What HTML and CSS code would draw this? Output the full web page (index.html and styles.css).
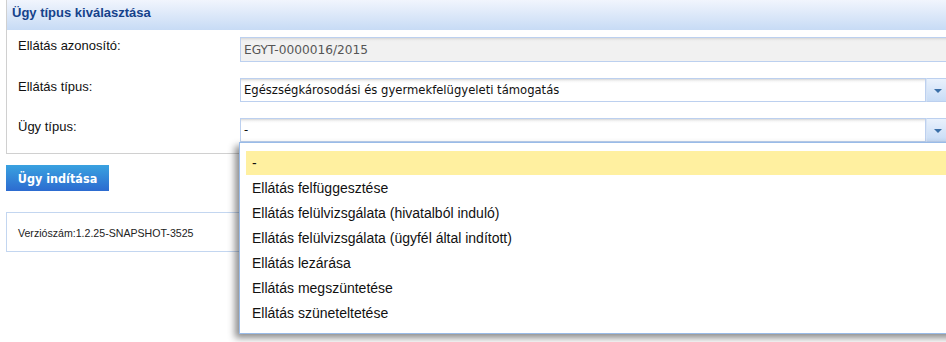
FILE: index.html
```html
<!DOCTYPE html>
<html lang="hu">
<head>
    <meta charset="UTF-8">
    <title>Ügy típus kiválasztása</title>
    <link rel="stylesheet" href="styles.css">
</head>
<body>
    <div class="panel">
        <div class="panel-header">Ügy típus kiválasztása</div>
        <div class="panel-body">
            <div class="form-row">
                <label>Ellátás azonosító:</label>
                <div class="field disabled">EGYT-0000016/2015</div>
            </div>
            <div class="form-row">
                <label>Ellátás típus:</label>
                <div class="combo">
                    <div class="field">Egészségkárosodási és gyermekfelügyeleti támogatás</div>
                    <div class="trigger"></div>
                </div>
            </div>
            <div class="form-row">
                <label>Ügy típus:</label>
                <div class="combo">
                    <div class="field">-</div>
                    <div class="trigger"></div>
                </div>
            </div>
        </div>
    </div>

    <button class="btn" type="button">Ügy indítása</button>

    <div class="version">Verziószám:1.2.25-SNAPSHOT-3525</div>

    <ul class="combo-list">
        <li class="selected">-</li>
        <li>Ellátás felfüggesztése</li>
        <li>Ellátás felülvizsgálata (hivatalból induló)</li>
        <li>Ellátás felülvizsgálata (ügyfél által indított)</li>
        <li>Ellátás lezárása</li>
        <li>Ellátás megszüntetése</li>
        <li>Ellátás szüneteltetése</li>
    </ul>
</body>
</html>
```

FILE: styles.css
```css
body{
    margin: 0;
    padding-left: 6px;
    font-family: "Liberation Sans", Arial, sans-serif;
    font-size: 13px;
    color: #111;
    background: #fff;
    overflow: hidden;
    position: relative;
    height: 342px;
}
.panel{
    width: 954px;
    border-left: 1px solid #d0d0d0;
    border-bottom: 1px solid #d0d0d0;
}
.panel-header{
    height: 30px;
    line-height: 26px;
    padding-left: 5px;
    font-weight: bold;
    font-size: 13px;
    color: #15428b;
    background: linear-gradient(#f1f5fd, #c7dbf5);
    box-sizing: border-box;
}
.panel-body{
    padding: 7px 13px 11px 11px;
    display: flex;
    flex-direction: column;
    gap: 16px;
}
.form-row{
    display: grid;
    grid-template-columns: 222px 1fr;
    align-items: start;
}
.form-row label{
    padding-top: 1px;
}
.field{
    height: 24px;
    line-height: 22px;
    box-sizing: border-box;
    border: 1px solid #bcd0ef;
    padding-left: 3px;
    font-family: "DejaVu Sans", Verdana, sans-serif;
    font-size: 11.6px;
    color: #111;
    background: linear-gradient(#d8d8d8 0, #f6f6f6 2px, #fff 4px);
}
.field.disabled{
    height: 25px;
    line-height: 24px;
    font-size: 12.2px;
    color: #555;
    background: linear-gradient(#d8d8d8 0, #ececec 2px, #f1f1f1 4px);
}
.combo{
    display: flex;
}
.combo .field{
    flex: 1;
}
.trigger{
    width: 22px;
    height: 24px;
    box-sizing: border-box;
    border: 1px solid #bcd0ef;
    border-left: 1px solid #d6e3f5;
    background: linear-gradient(#e9f1fc, #c8dcf6);
    position: relative;
}
.trigger:after{
    content: "";
    position: absolute;
    left: 7px;
    top: 10px;
    border-left: 4px solid transparent;
    border-right: 4px solid transparent;
    border-top: 4px solid #3a6fa8;
}
.btn{
    display: block;
    margin-top: 11px;
    width: 103px;
    height: 26px;
    border: 0;
    padding: 0;
    font-family: "DejaVu Sans Condensed", "DejaVu Sans", sans-serif;
    font-weight: bold;
    font-size: 12.5px;
    color: #fff;
    background: linear-gradient(#39a2e0, #2c6bd0);
}
.version{
    margin-top: 21px;
    width: 360px;
    height: 40px;
    line-height: 40px;
    box-sizing: border-box;
    border: 1px solid #c3d6f0;
    padding-left: 11px;
    font-size: 10.6px;
    color: #222;
}
.combo-list{
    position: absolute;
    left: 239px;
    top: 142px;
    width: 712px;
    margin: 0;
    padding: 8px 0 7px 6px;
    list-style: none;
    background: #fff;
    border: 1px solid #99bbe8;
    box-shadow: -4px 4px 7px rgba(0, 0, 0, 0.45);
}
.combo-list li{
    height: 25px;
    line-height: 25px;
    padding-left: 6px;
    margin-right: 9px;
    font-size: 14px;
    color: #111;
}
.combo-list li.selected{
    background: #fff0a0;
    height: 24px;
    margin-bottom: 1px;
}
```
